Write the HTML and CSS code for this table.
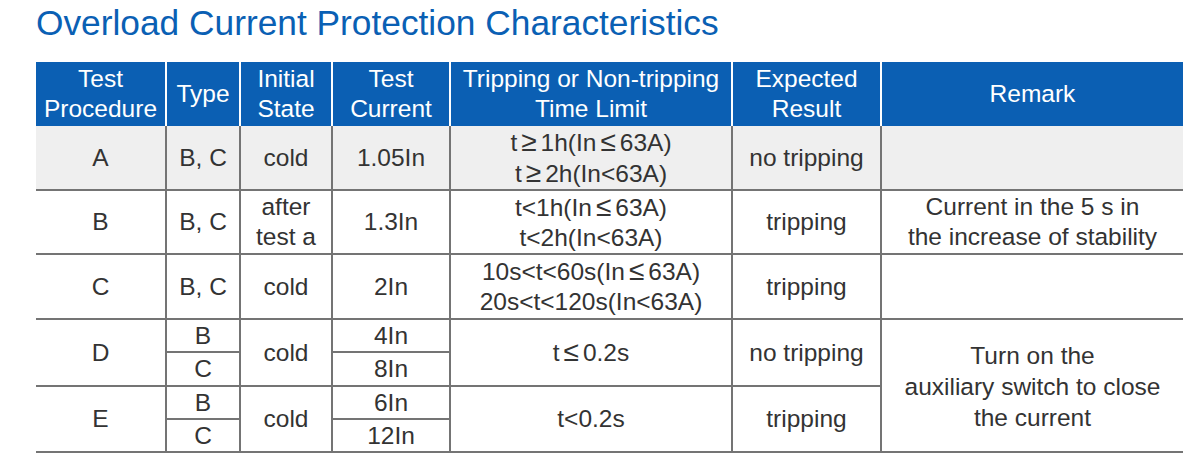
FILE: index.html
```html
<!DOCTYPE html>
<html lang="en">
<head>
<meta charset="utf-8">
<title>Overload Current Protection Characteristics</title>
<link rel="stylesheet" href="styles.css">
</head>
<body>
<div class="page">
  <h1 class="title">Overload Current Protection Characteristics</h1>
  <table class="spec">
    <colgroup>
      <col class="c1"><col class="c2"><col class="c3"><col class="c4"><col class="c5"><col class="c6"><col class="c7">
    </colgroup>
    <thead>
      <tr class="head">
        <th>Test<br>Procedure</th>
        <th>Type</th>
        <th>Initial<br>State</th>
        <th>Test<br>Current</th>
        <th>Tripping or Non-tripping<br>Time Limit</th>
        <th>Expected<br>Result</th>
        <th>Remark</th>
      </tr>
    </thead>
    <tbody>
      <tr class="r-a shade">
        <td>A</td>
        <td>B, C</td>
        <td>cold</td>
        <td>1.05In</td>
        <td>t<span class="sym">≥</span>1h(In<span class="sym">≤</span>63A)<br>t<span class="sym">≥</span>2h(In&lt;63A)</td>
        <td>no tripping</td>
        <td></td>
      </tr>
      <tr class="r-b">
        <td>B</td>
        <td>B, C</td>
        <td>after<br>test a</td>
        <td>1.3In</td>
        <td>t&lt;1h(In<span class="sym">≤</span>63A)<br>t&lt;2h(In&lt;63A)</td>
        <td>tripping</td>
        <td>Current in the 5 s in<br>the increase of stability</td>
      </tr>
      <tr class="r-c">
        <td>C</td>
        <td>B, C</td>
        <td>cold</td>
        <td>2In</td>
        <td>10s&lt;t&lt;60s(In<span class="sym">≤</span>63A)<br>20s&lt;t&lt;120s(In&lt;63A)</td>
        <td>tripping</td>
        <td></td>
      </tr>
      <tr class="r-d1">
        <td rowspan="2">D</td>
        <td>B</td>
        <td rowspan="2">cold</td>
        <td>4In</td>
        <td rowspan="2">t<span class="sym">≤</span>0.2s</td>
        <td rowspan="2">no tripping</td>
        <td rowspan="4" class="remark">Turn on the<br>auxiliary switch to close<br>the current</td>
      </tr>
      <tr class="r-d2">
        <td>C</td>
        <td>8In</td>
      </tr>
      <tr class="r-e1">
        <td rowspan="2">E</td>
        <td>B</td>
        <td rowspan="2">cold</td>
        <td>6In</td>
        <td rowspan="2">t&lt;0.2s</td>
        <td rowspan="2">tripping</td>
      </tr>
      <tr class="r-e2">
        <td>C</td>
        <td>12In</td>
      </tr>
    </tbody>
  </table>
</div>
</body>
</html>
```

FILE: styles.css
```css
html, body {
  margin: 0;
  padding: 0;
  background: #ffffff;
}

.page {
  padding: 3px 0 0 36px;
  font-family: "Liberation Sans", Arial, Helvetica, sans-serif;
}

.title {
  margin: 0;
  font-size: 35.3px;
  line-height: 40px;
  font-weight: normal;
  color: #0a60b4;
}

.spec {
  margin-top: 19px;
  width: 1147px;
  border-collapse: collapse;
  border-left: hidden;
  border-right: hidden;
  table-layout: fixed;
}

.c1 { width: 130px; }
.c2 { width: 74px; }
.c3 { width: 92px; }
.c4 { width: 118px; }
.c5 { width: 282px; }
.c6 { width: 149px; }
.c7 { width: 302px; }

.spec th {
  background: #0b5fb3;
  color: #ffffff;
  font-weight: normal;
  font-size: 24.5px;
  line-height: 30px;
  padding: 0;
  border-left: 2px solid #ffffff;
  text-align: center;
  vertical-align: middle;
}

.head { height: 64px; }

.spec td {
  color: #333333;
  font-size: 24.5px;
  line-height: 30px;
  padding: 0;
  text-align: center;
  vertical-align: middle;
  border-left: 2px solid #747474;
  border-bottom: 2px solid #747474;
}

.sym {
  font-size: 28px;
  padding: 0 4px;
}

.spec td.remark {
  line-height: 31px;
  padding-top: 2px;
}

.shade td { background: #efefef; }

.r-a { height: 64px; }
.r-b { height: 64px; }
.r-c { height: 65px; }
.r-d1 { height: 33px; }
.r-d2 { height: 34px; }
.r-e1 { height: 33px; }
.r-e2 { height: 33px; }

.r-d1 td, .r-d2 td, .r-e1 td, .r-e2 td {
  line-height: 26px;
}
```
